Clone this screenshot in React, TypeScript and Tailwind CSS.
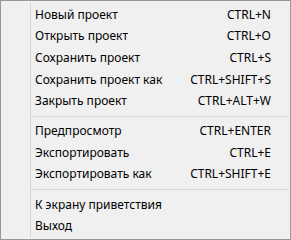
import React from "react";

type Item = { label: string; shortcut?: string } | "sep";

const items: Item[] = [
  { label: "Новый проект", shortcut: "CTRL+N" },
  { label: "Открыть проект", shortcut: "CTRL+O" },
  { label: "Сохранить проект", shortcut: "CTRL+S" },
  { label: "Сохранить проект как", shortcut: "CTRL+SHIFT+S" },
  { label: "Закрыть проект", shortcut: "CTRL+ALT+W" },
  "sep",
  { label: "Предпросмотр", shortcut: "CTRL+ENTER" },
  { label: "Экспортировать", shortcut: "CTRL+E" },
  { label: "Экспортировать как", shortcut: "CTRL+SHIFT+E" },
  "sep",
  { label: "К экрану приветствия" },
  { label: "Выход" },
];

export default function App() {
  return (
    <div
      className="w-[291px] h-[240px] bg-[#f0f0f0] border border-[#979797] relative text-[12px] text-[#000] py-[3px]"
      style={{ fontFamily: '"Noto Sans", "Open Sans", sans-serif' }}
    >
      <div className="absolute left-[29px] top-[2px] bottom-[2px] w-px bg-[#d7d7d7]" />
      <div className="flex flex-col relative">
        {items.map((it, i) =>
          it === "sep" ? (
            <div key={i} className="h-[8.5px] flex items-center pl-[29px] pr-[2px]">
              <div className="h-px w-full bg-[#d7d7d7]" />
            </div>
          ) : (
            <div key={i} className="h-[21.6px] flex items-center justify-between pl-[34px] pr-[19px] leading-none">
              <span>{it.label}</span>
              {it.shortcut && <span>{it.shortcut}</span>}
            </div>
          )
        )}
      </div>
    </div>
  );
}
